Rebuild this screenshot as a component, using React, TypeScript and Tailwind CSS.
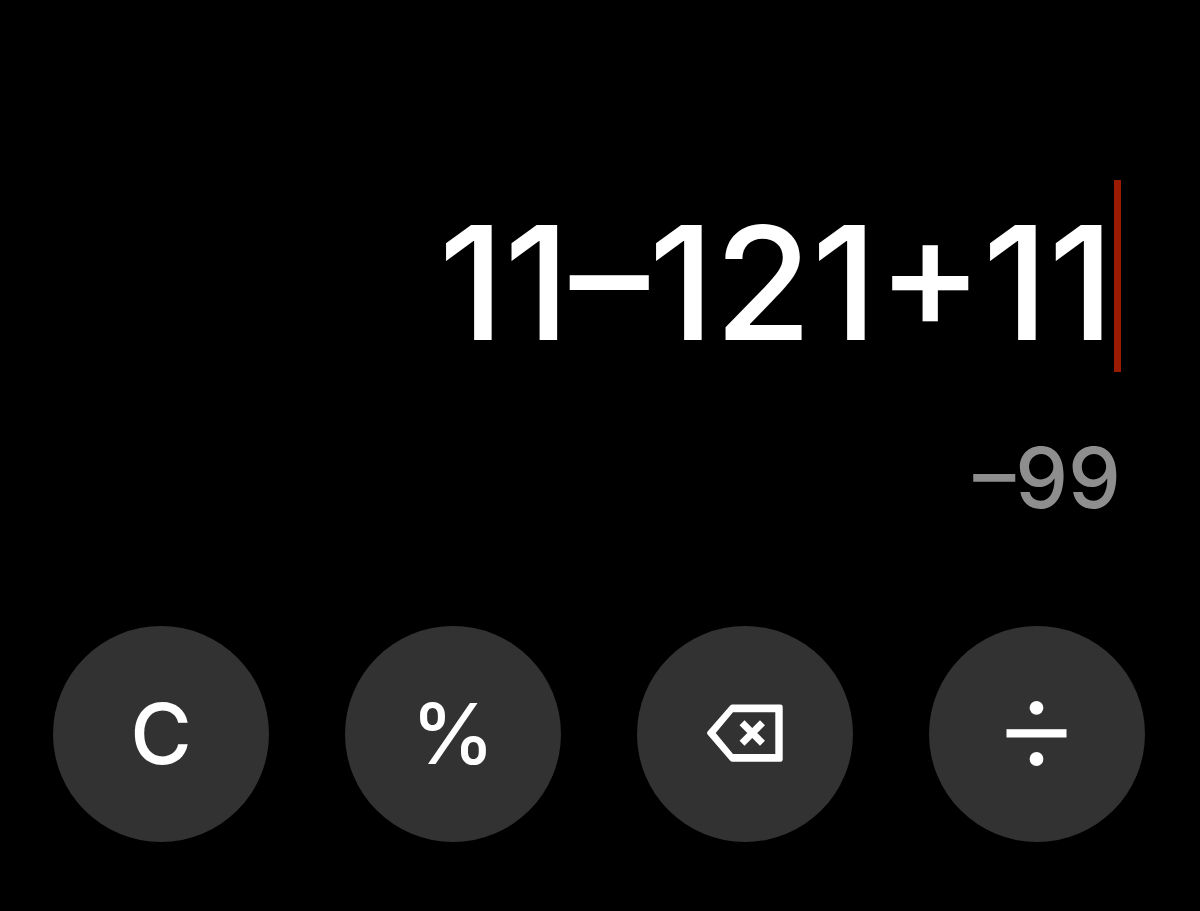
import type { ReactNode } from "react"

function Key({ label, children }: { label: string; children: ReactNode }) {
  return (
    <button
      type="button"
      aria-label={label}
      className="flex aspect-square w-[74%] items-center justify-center justify-self-center rounded-full bg-[#323232] font-[Inter,sans-serif] text-[84px] leading-none font-medium text-white active:bg-[#454545]"
    >
      {children}
    </button>
  )
}

function BackspaceIcon() {
  return (
    <svg viewBox="0 0 80 64" className="h-16 w-20" fill="currentColor" aria-hidden="true">
      <path
        fillRule="evenodd"
        d="M27.5 2.5H75.5Q77.7 2.5 77.7 4.7V57.5Q77.7 59.7 75.5 59.7H27.5Q26 59.7 25 58.5L2.6 32.6Q1.5 31.1 2.6 29.6L25 3.7Q26 2.5 27.5 2.5ZM28 10.3L10.7 31.1L28 52H70.3V10.3Z"
      />
      <path d="M39.5 23.2L55 38.8M55 23.2L39.5 38.8" stroke="currentColor" strokeWidth="7" strokeLinecap="square" />
    </svg>
  )
}

function DivideIcon() {
  return (
    <svg viewBox="0 0 64 72" className="h-18 w-16" fill="currentColor" aria-hidden="true">
      <circle cx="31.5" cy="9.8" r="6.9" />
      <rect x="1.5" y="31.2" width="60" height="8.3" />
      <circle cx="31.5" cy="61" r="6.9" />
    </svg>
  )
}

function Display({ expression, result }: { expression: string; result: string }) {
  return (
    <section className="pr-[79px] pl-10 font-[Inter,sans-serif] font-medium">
      <div className="flex items-stretch">
        <input
          readOnly
          value={expression}
          aria-label="Expression"
          className="h-48 min-w-0 flex-1 bg-transparent pt-3 text-right text-[158px] leading-none text-white outline-none"
        />
        <span className="w-[7px] bg-[#9b1b00]" />
      </div>
      <output aria-label="Result" className="mt-14 block text-right text-[84px] leading-[100px] text-[#8e8e8e]">
        {result}
      </output>
    </section>
  )
}

export default function App() {
  return (
    <main className="min-h-screen bg-black pt-[180px] pb-16">
      <Display expression="11–121+11" result="–99" />
      <div className="mt-[98px] grid grid-cols-4 pr-[17px] pl-[15px]">
        <Key label="Clear">C</Key>
        <Key label="Percent">%</Key>
        <Key label="Backspace">
          <BackspaceIcon />
        </Key>
        <Key label="Divide">
          <DivideIcon />
        </Key>
      </div>
    </main>
  )
}
